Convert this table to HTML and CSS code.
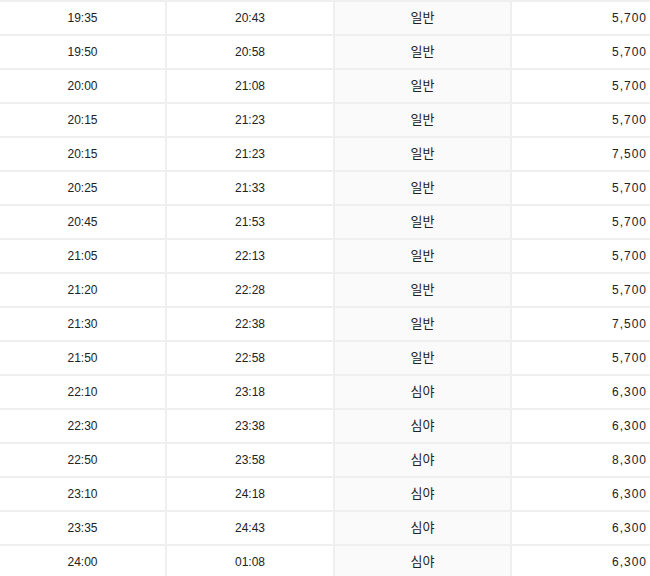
FILE: index.html
```html
<!DOCTYPE html>
<html lang="ko">
<head>
<meta charset="utf-8">
<title>시간표</title>
<link rel="stylesheet" href="styles.css">
</head>
<body>
<table class="fares">
  <colgroup>
    <col class="c-dep"><col class="c-arr"><col class="c-type"><col class="c-fare">
  </colgroup>
  <tbody>
    <tr><td>19:35</td><td>20:43</td><td class="type">일반</td><td class="fare">5,700</td></tr>
    <tr><td>19:50</td><td>20:58</td><td class="type">일반</td><td class="fare">5,700</td></tr>
    <tr><td>20:00</td><td>21:08</td><td class="type">일반</td><td class="fare">5,700</td></tr>
    <tr><td>20:15</td><td>21:23</td><td class="type">일반</td><td class="fare">5,700</td></tr>
    <tr><td>20:15</td><td>21:23</td><td class="type">일반</td><td class="fare">7,500</td></tr>
    <tr><td>20:25</td><td>21:33</td><td class="type">일반</td><td class="fare">5,700</td></tr>
    <tr><td>20:45</td><td>21:53</td><td class="type">일반</td><td class="fare">5,700</td></tr>
    <tr><td>21:05</td><td>22:13</td><td class="type">일반</td><td class="fare">5,700</td></tr>
    <tr><td>21:20</td><td>22:28</td><td class="type">일반</td><td class="fare">5,700</td></tr>
    <tr><td>21:30</td><td>22:38</td><td class="type">일반</td><td class="fare">7,500</td></tr>
    <tr><td>21:50</td><td>22:58</td><td class="type">일반</td><td class="fare">5,700</td></tr>
    <tr><td>22:10</td><td>23:18</td><td class="type">심야</td><td class="fare">6,300</td></tr>
    <tr><td>22:30</td><td>23:38</td><td class="type">심야</td><td class="fare">6,300</td></tr>
    <tr><td>22:50</td><td>23:58</td><td class="type">심야</td><td class="fare">8,300</td></tr>
    <tr><td>23:10</td><td>24:18</td><td class="type">심야</td><td class="fare">6,300</td></tr>
    <tr><td>23:35</td><td>24:43</td><td class="type">심야</td><td class="fare">6,300</td></tr>
    <tr><td>24:00</td><td>01:08</td><td class="type">심야</td><td class="fare">6,300</td></tr>
  </tbody>
</table>
</body>
</html>
```
FILE: styles.css
```css
html, body {
  margin: 0;
  padding: 0;
  background: #ffffff;
  overflow: hidden;
}

.fares {
  width: 650px;
  table-layout: fixed;
  border-collapse: separate;
  border-spacing: 0;
  border-top: 2px solid #efefef;
  font-family: "Liberation Sans", "Noto Sans CJK KR", sans-serif;
  font-size: 12px;
  color: #222222;
}

.c-dep { width: 167px; }
.c-arr { width: 168px; }
.c-type { width: 177px; }
.c-fare { width: 138px; }

.fares td {
  height: 32px;
  padding: 0;
  text-align: center;
  vertical-align: middle;
  border-bottom: 2px solid #efefef;
  border-right: 2px solid #efefef;
  line-height: 14px;
}

.fares td.type {
  background: #fafafa;
  font-size: 13px;
}

.fares td.fare {
  text-align: right;
  padding-right: 3px;
  letter-spacing: 1px;
  border-right: 0;
}
```
